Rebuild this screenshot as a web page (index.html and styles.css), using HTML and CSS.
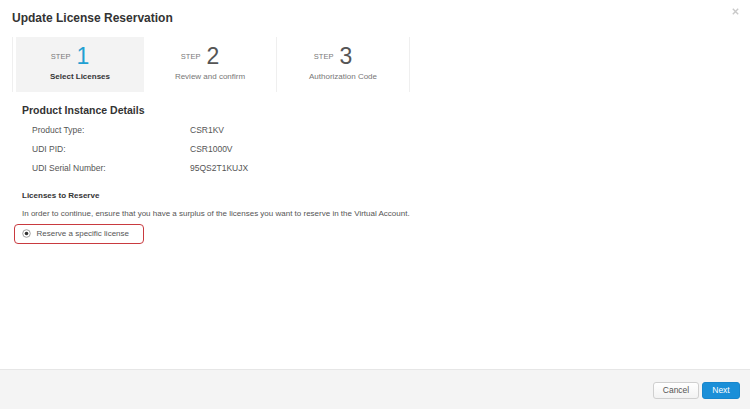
FILE: index.html
```html
<!DOCTYPE html>
<html>
<head>
<meta charset="utf-8">
<link rel="stylesheet" href="styles.css">
</head>
<body>
<div class="modal">
  <div class="header">
    <h1 class="title">Update License Reservation</h1>
    <span class="close" aria-label="Close">
      <svg width="7" height="7" viewBox="0 0 7 7"><path d="M0.8 0.8 L6.2 6.2 M6.2 0.8 L0.8 6.2" stroke="#c9c9c9" stroke-width="1.4" fill="none"/></svg>
    </span>
  </div>

  <div class="steps">
    <div class="step active">
      <div class="step-head"><span class="step-word">STEP</span><span class="step-num">1</span></div>
      <div class="step-label">Select Licenses</div>
    </div>
    <div class="step">
      <div class="step-head"><span class="step-word">STEP</span><span class="step-num">2</span></div>
      <div class="step-label">Review and confirm</div>
    </div>
    <div class="step">
      <div class="step-head"><span class="step-word">STEP</span><span class="step-num">3</span></div>
      <div class="step-label">Authorization Code</div>
    </div>
  </div>

  <div class="content">
    <h2 class="section-title">Product Instance Details</h2>
    <div class="details">
      <div class="row"><span class="label">Product Type:</span><span class="value">CSR1KV</span></div>
      <div class="row"><span class="label">UDI PID:</span><span class="value">CSR1000V</span></div>
      <div class="row"><span class="label">UDI Serial Number:</span><span class="value">95QS2T1KUJX</span></div>
    </div>
    <h3 class="sub-title">Licenses to Reserve</h3>
    <p class="note">In order to continue, ensure that you have a surplus of the licenses you want to reserve in the Virtual Account.</p>
    <label class="radio-option">
      <svg class="radio" width="9" height="9" viewBox="0 0 9 9"><circle cx="4.5" cy="4.5" r="3.8" fill="#fff" stroke="#8a8a8a" stroke-width="0.8"/><circle cx="4.5" cy="4.5" r="1.8" fill="#333"/></svg>
      <span>Reserve a specific license</span>
    </label>
  </div>

  <div class="footer">
    <button class="btn btn-cancel">Cancel</button>
    <button class="btn btn-next">Next</button>
  </div>
</div>
</body>
</html>
```

FILE: styles.css
```css
html, body {
  margin: 0;
  padding: 0;
  background: #ffffff;
}

body {
  font-family: "Liberation Sans", Arial, Helvetica, sans-serif;
  color: #555;
}

.modal {
  width: 750px;
  height: 409px;
  display: flex;
  flex-direction: column;
  background: #fff;
}

.header {
  display: flex;
  justify-content: space-between;
  align-items: flex-start;
  padding: 0 11px 0 12px;
}

.title {
  margin: 11px 0 0 0;
  font-size: 12px;
  line-height: 14px;
  font-weight: bold;
  color: #333;
}

.close {
  display: block;
  margin-top: 8px;
  width: 7px;
  height: 7px;
}

.close svg {
  display: block;
}

.steps {
  display: flex;
  margin: 12px 0 0 12px;
  width: 398px;
  height: 55px;
  border-left: 1px solid #efefef;
}

.step {
  width: 132px;
  border-right: 1px solid #efefef;
  text-align: center;
}

.step.active {
  width: 128px;
  margin-left: 3px;
  background: #f3f3f3;
  border-right: none;
}

.step-head {
  display: flex;
  justify-content: center;
  align-items: center;
  margin-top: 7px;
  padding-right: 20px;
  height: 24px;
  white-space: nowrap;
}

.step-word {
  font-size: 7.5px;
  line-height: 9px;
  color: #7a7a7a;
  margin-right: 6px;
  margin-top: 1px;
}

.step-num {
  font-size: 23px;
  line-height: 24px;
  color: #555;
}

.step.active .step-num {
  color: #1fa0d2;
}

.step-label {
  margin-top: 4px;
  font-size: 8px;
  line-height: 10px;
  color: #777;
  white-space: nowrap;
}

.step.active .step-label {
  font-weight: bold;
  color: #333;
}

.content {
  padding: 11px 0 0 22px;
}

.section-title {
  margin: 0;
  font-size: 10.5px;
  line-height: 14px;
  font-weight: bold;
  color: #333;
}

.details {
  margin-top: 3.5px;
  padding-left: 10px;
}

.row {
  display: flex;
  font-size: 8.5px;
  line-height: 19.4px;
  color: #555;
}

.label {
  width: 158px;
}

.sub-title {
  margin: 11.7px 0 0 0;
  font-size: 8px;
  line-height: 12px;
  font-weight: bold;
  color: #333;
}

.note {
  margin: 5.5px 0 0 0;
  font-size: 8px;
  line-height: 12px;
  color: #555;
}

.radio-option {
  margin: 4px 0 0 -8px;
  width: 130px;
  height: 20px;
  box-sizing: border-box;
  border: 1.5px solid #c93a3f;
  border-radius: 4px;
  display: flex;
  align-items: center;
  padding-left: 6.5px;
  font-size: 8px;
  color: #555;
}

.radio {
  display: block;
  margin-right: 6px;
}

.footer {
  margin-top: auto;
  height: 40px;
  box-sizing: border-box;
  border-top: 1px solid #e6e6e6;
  background: #f4f4f4;
  display: flex;
  justify-content: flex-end;
  align-items: flex-start;
  padding: 12px 10px 0 0;
  gap: 3px;
}

.btn {
  height: 17px;
  box-sizing: border-box;
  font-family: "Liberation Sans", Arial, Helvetica, sans-serif;
  font-size: 8.5px;
  border-radius: 3px;
  padding: 0;
  line-height: 15px;
}

.btn-cancel {
  width: 46px;
  background: linear-gradient(#ffffff, #f2f2f2);
  border: 1px solid #cfcfcf;
  color: #555;
}

.btn-next {
  width: 38px;
  background: #1a8fd8;
  border: 1px solid #1786cc;
  color: #fff;
}
```
